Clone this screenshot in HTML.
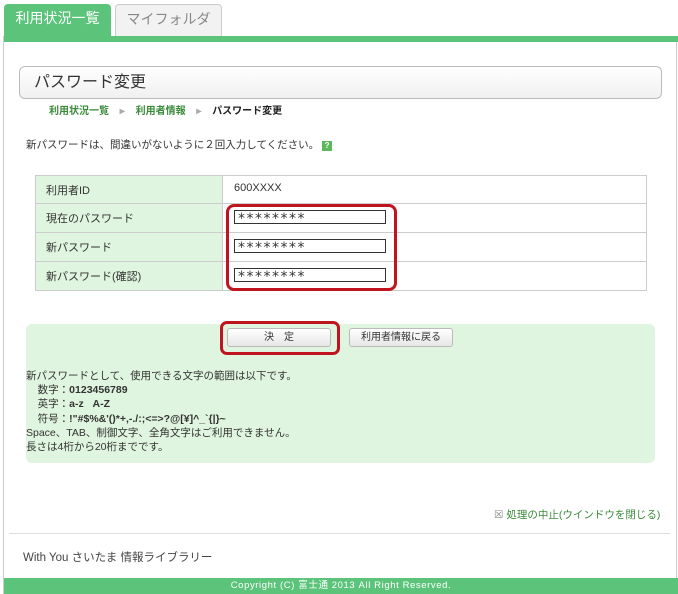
<!DOCTYPE html>
<html><head><meta charset="utf-8"><style>
*{margin:0;padding:0;box-sizing:border-box}
body{width:678px;height:594px;background:#fff;font-family:"Liberation Sans","Noto Sans CJK JP",sans-serif;font-size:11px;color:#333;position:relative;overflow:hidden}
.a{position:absolute}
.tab{position:absolute;top:4px;height:33px;font-size:14px;line-height:29px;text-align:center;border-radius:4px 4px 0 0}
.inp{position:absolute;left:234px;width:152px;height:14px;border:1px solid #333;background:#fff;font-size:14px;line-height:16px;padding-left:3px;letter-spacing:1.5px;overflow:hidden;font-family:"DejaVu Sans",sans-serif}
.lbl{position:absolute;left:46px;font-size:11px}
.btn{position:absolute;top:328px;height:19px;border:1px solid #bbb;border-radius:3px;background:linear-gradient(#fff,#e6e6e6);font-size:10px;line-height:17px;text-align:center}
</style></head><body>
<div class="a" style="left:3px;top:36px;width:674px;height:558px;border-left:1px solid #ccc;border-right:1px solid #ccc"></div>
<div class="tab" style="left:4px;width:107px;background:#5cc47a;color:#fff">利用状況一覧</div>
<div class="tab" style="left:115px;width:107px;background:#f2f2f2;border:1px solid #ccc;border-bottom:none;color:#888">マイフォルダ</div>
<div class="a" style="left:4px;top:36px;width:674px;height:6px;background:#5cc47a"></div>
<div class="a" style="left:19px;top:66px;width:643px;height:33px;border:1px solid #bbb;border-radius:6px;background:linear-gradient(#fff,#f0f0f0);font-size:16px;line-height:31px;padding-left:14px;color:#333">パスワード変更</div>
<div class="a" style="left:49px;top:102px;font-size:10px;font-weight:bold;color:#3a8a3a">利用状況一覧 <span style="color:#aaa;margin:0 8px">▸</span> 利用者情報 <span style="color:#aaa;margin:0 8px">▸</span> <span style="color:#222">パスワード変更</span></div>
<div class="a" style="left:26px;top:137px;font-size:10.5px">新パスワードは、間違いがないように２回入力してください。 <span style="display:inline-block;width:10px;height:10px;background:#5cb85c;color:#fff;font-size:8px;line-height:10px;text-align:center;font-weight:bold">?</span></div>
<div class="a" style="left:35px;top:175px;width:612px;height:116px;border:1px solid #ccc"></div>
<div class="a" style="left:36px;top:176px;width:187px;height:114px;background:#dff5df;border-right:1px solid #ccc"></div>
<div class="a" style="left:36px;top:203px;width:610px;border-top:1px solid #ccc"></div>
<div class="a" style="left:36px;top:232px;width:610px;border-top:1px solid #ccc"></div>
<div class="a" style="left:36px;top:261px;width:610px;border-top:1px solid #ccc"></div>
<div class="lbl" style="top:182px">利用者ID</div>
<div class="a" style="left:234px;top:182px">600XXXX</div>
<div class="lbl" style="top:210px">現在のパスワード</div>
<div class="lbl" style="top:239px">新パスワード</div>
<div class="lbl" style="top:268px">新パスワード(確認)</div>
<div class="inp" style="top:210px">********</div>
<div class="inp" style="top:239px">********</div>
<div class="inp" style="top:268px">********</div>
<div class="a" style="left:226px;top:204px;width:171px;height:87px;border:3px solid #c0151e;border-radius:8px"></div>
<div class="a" style="left:26px;top:324px;width:629px;height:139px;background:#dff5df;border-radius:6px"></div>
<div class="btn" style="left:227px;width:104px">決　定</div>
<div class="btn" style="left:349px;width:104px">利用者情報に戻る</div>
<div class="a" style="left:220px;top:321px;width:120px;height:34px;border:3px solid #c0151e;border-radius:7px"></div>
<div class="a" style="left:26px;top:369px;font-size:10.5px;line-height:14.2px">新パスワードとして、使用できる文字の範囲は以下です。<br>
&nbsp;&nbsp;&nbsp;&nbsp;数字：<b>0123456789</b><br>
&nbsp;&nbsp;&nbsp;&nbsp;英字：<b>a-z&nbsp;&nbsp;&nbsp;A-Z</b><br>
&nbsp;&nbsp;&nbsp;&nbsp;符号：<b>!"#$%&amp;'()*+,-./:;&lt;=&gt;?@[¥]^_`{|}~</b><br>
Space、TAB、制御文字、全角文字はご利用できません。<br>長さは4桁から20桁までです。</div>
<div class="a" style="left:494px;top:507px;font-size:10.5px;color:#3a8a3a"><span style="color:#888">☒</span> 処理の中止(ウインドウを閉じる)</div>
<div class="a" style="left:9px;top:533px;width:661px;border-top:1px solid #ddd"></div>
<div class="a" style="left:23px;top:549px;font-size:11.5px;color:#444">With You さいたま 情報ライブラリー</div>
<div class="a" style="left:4px;top:578px;width:674px;height:16px;background:#5cc47a;color:#fff;font-size:9.5px;letter-spacing:0.6px;line-height:16px;text-align:center">Copyright (C) 富士通 2013 All Right Reserved.</div>
</body></html>
